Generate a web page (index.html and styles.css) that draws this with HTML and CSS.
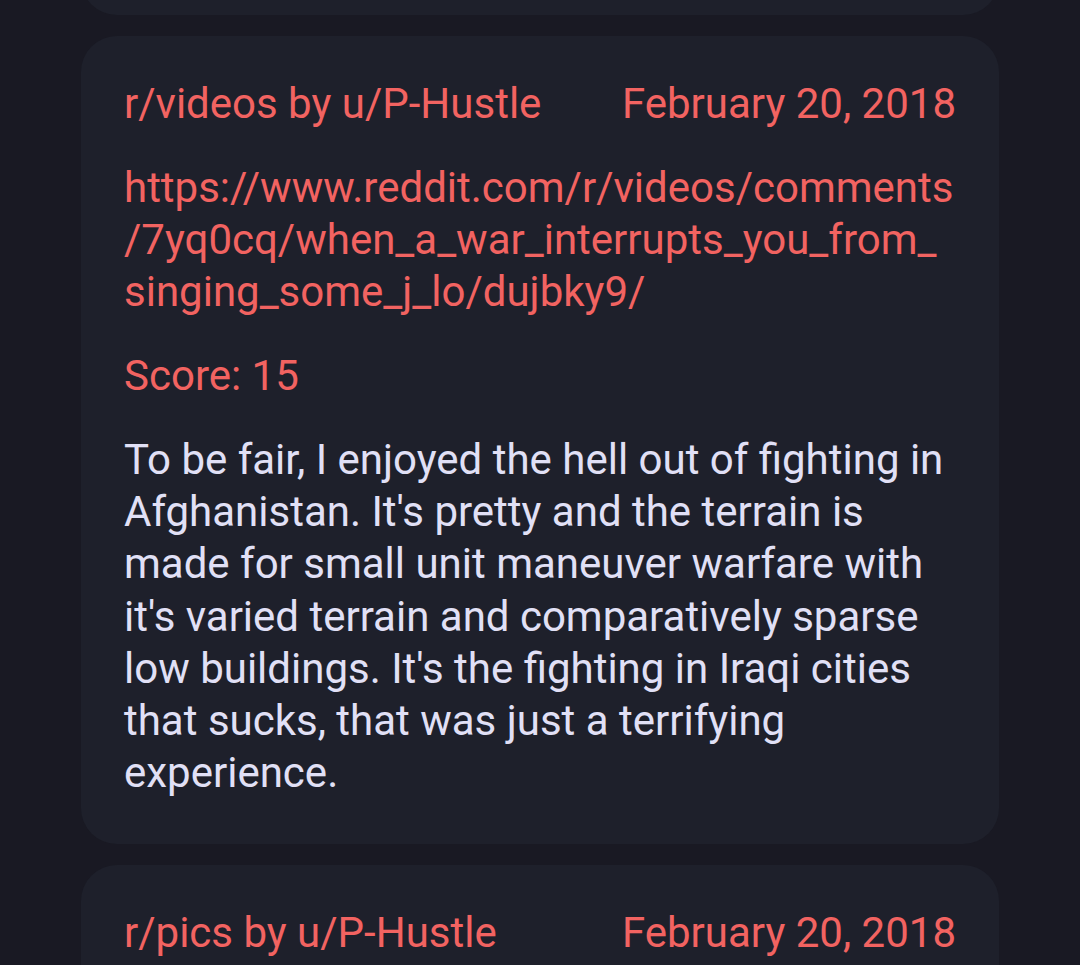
FILE: index.html
```html
<!DOCTYPE html>
<html>
<head>
  <title>Saved comments</title>
  <link rel="stylesheet" href="styles.css">
</head>
<body>
  <div class="feed">
    <div class="card stub"></div>

    <div class="card">
      <div class="meta">
        <span class="source">r/videos by u/P-Hustle</span>
        <span class="date">February 20, 2018</span>
      </div>
      <div class="link">https://www.reddit.com/r/videos/comments<br>/7yq0cq/when_a_war_interrupts_you_from_<br>singing_some_j_lo/dujbky9/</div>
      <div class="score">Score: 15</div>
      <div class="body">To be fair, I enjoyed the hell out of fighting in Afghanistan. It's pretty and the terrain is made for small unit maneuver warfare with it's varied terrain and comparatively sparse low buildings. It's the fighting in Iraqi cities that sucks, that was just a terrifying experience.</div>
    </div>

    <div class="card">
      <div class="meta">
        <span class="source">r/pics by u/P-Hustle</span>
        <span class="date">February 20, 2018</span>
      </div>
    </div>
  </div>
</body>
</html>
```

FILE: styles.css
```css
html, body {
  margin: 0;
  height: 100%;
  overflow: hidden;
}

body {
  background-color: #191923;
  font-family: Roboto, "Noto Sans", sans-serif;
  font-size: 42px;
  line-height: 52px;
}

.feed {
  width: 918px;
  margin: 0 0 0 81px;
  display: flex;
  flex-direction: column;
  gap: 21px;
}

.card {
  background-color: #1e202b;
  border-radius: 36px;
  padding: 42px 43px 45px;
  display: flex;
  flex-direction: column;
  gap: 32px;
}

/* bottom of the card above, scrolled mostly out of view */
.card.stub {
  height: 15px;
  padding: 0;
  border-radius: 0 0 36px 36px;
  border-top: 36px solid #1e202b;
  margin-top: -36px;
}

.meta {
  display: flex;
  justify-content: space-between;
}

.source,
.date,
.link,
.score {
  color: #f26361;
}

.body {
  color: #e1e0f6;
  line-height: 52.2px;
}
```
